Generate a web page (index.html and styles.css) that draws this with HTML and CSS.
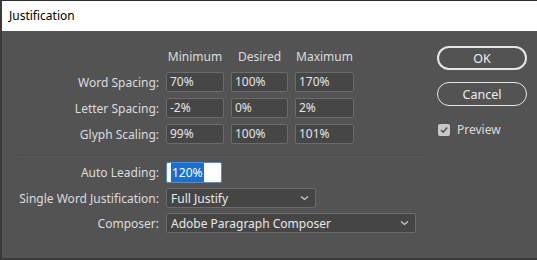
FILE: index.html
```html
<!DOCTYPE html>
<html lang="en">
<head>
    <meta charset="UTF-8">
    <title>Justification</title>
    <link rel="stylesheet" href="styles.css">
</head>
<body>
    <div class="window">
        <div class="titlebar">Justification</div>
        <div class="content">
            <div class="main">
                <div class="spacing">
                    <span></span>
                    <span class="head">Minimum</span>
                    <span class="head">Desired</span>
                    <span class="head">Maximum</span>

                    <label>Word Spacing:</label>
                    <div class="field">70%</div>
                    <div class="field">100%</div>
                    <div class="field">170%</div>

                    <label>Letter Spacing:</label>
                    <div class="field">-2%</div>
                    <div class="field">0%</div>
                    <div class="field">2%</div>

                    <label>Glyph Scaling:</label>
                    <div class="field">99%</div>
                    <div class="field">100%</div>
                    <div class="field">101%</div>
                </div>

                <hr class="sep">

                <div class="options">
                    <label>Auto Leading:</label>
                    <div class="field focus"><span class="sel">120%</span></div>

                    <label>Single Word Justification:</label>
                    <div class="select short">Full Justify
                        <svg width="9" height="6" viewBox="0 0 9 6"><path d="M1 1.5 L4.5 4.5 L8 1.5" fill="none" stroke="#cfcfcf" stroke-width="1.2"/></svg>
                    </div>

                    <label>Composer:</label>
                    <div class="select long">Adobe Paragraph Composer
                        <svg width="9" height="6" viewBox="0 0 9 6"><path d="M1 1.5 L4.5 4.5 L8 1.5" fill="none" stroke="#cfcfcf" stroke-width="1.2"/></svg>
                    </div>
                </div>
            </div>

            <div class="side">
                <button class="btn default">OK</button>
                <button class="btn">Cancel</button>
                <div class="check">
                    <span class="box">
                        <svg width="10" height="10" viewBox="0 0 10 10"><path d="M2 5 L4.2 7.2 L8.2 2.6" fill="none" stroke="#505050" stroke-width="1.6"/></svg>
                    </span>
                    Preview
                </div>
            </div>
        </div>
    </div>
</body>
</html>
```

FILE: styles.css
```css
body {
    margin: 0;
    background-color: #535353;
    font-family: "Noto Sans", "Open Sans", sans-serif;
    font-size: 12px;
}

.window {
    box-sizing: border-box;
    width: 537px;
    height: 260px;
    border-left: 2px solid #3a3a3a;
    border-top: 1px solid #2e2e2e;
    border-bottom: 2px solid #3a3a3a;
    background-color: #535353;
    color: #dcdcdc;
}

.titlebar {
    height: 30px;
    line-height: 30px;
    padding-left: 7px;
    background-color: #fff;
    color: #000;
    font-size: 12px;
}

.content {
    display: flex;
}

.main {
    width: 416px;
    padding: 18px 0 0 6px;
}

.spacing {
    display: grid;
    grid-template-columns: 151px 58px 57px 59px;
    column-gap: 7px;
    row-gap: 6px;
    align-items: center;
}

.head {
    text-align: center;
    line-height: 16px;
    margin-bottom: 1px;
}

label {
    text-align: right;
}

.field {
    height: 18px;
    line-height: 18px;
    padding: 0 3px;
    background-color: #464646;
    border: 1px solid #6b6b6b;
    border-radius: 2px;
    color: #e4e4e4;
}

.sep {
    margin: 11px 0 5px 10px;
    border: none;
    border-top: 1px solid #4a4a4a;
    border-bottom: 1px solid #595959;
    width: 406px;
}

.options {
    display: grid;
    grid-template-columns: 151px auto;
    column-gap: 7px;
    row-gap: 5px;
    align-items: center;
    justify-items: start;
}

.options label {
    justify-self: end;
}

.field.focus {
    width: 47px;
    height: 19px;
    line-height: 19px;
    padding-left: 4px;
    background-color: #fff;
    border-color: #4d8fdc;
    color: #fff;
}

.sel {
    background-color: #1a6fd1;
    padding: 1px 1px;
}

.select {
    display: flex;
    align-items: center;
    justify-content: space-between;
    height: 18px;
    padding: 0 6px 0 4px;
    background-color: #454545;
    border: 1px solid #6b6b6b;
    border-radius: 2px;
    color: #e8e8e8;
}

.select.short {
    width: 138px;
}

.select.long {
    width: 238px;
}

.side {
    padding: 15px 0 0 13px;
    display: flex;
    flex-direction: column;
}

.btn {
    width: 90px;
    height: 24px;
    border: 1px solid #e6e6e6;
    border-radius: 12px;
    background-color: transparent;
    color: #eee;
    font-family: inherit;
    font-size: 12.5px;
    margin-bottom: 12px;
}

.btn.default {
    border-width: 2px;
}

.check {
    display: flex;
    align-items: center;
    gap: 7px;
    padding-left: 1px;
    margin-top: 3px;
}

.box {
    width: 12px;
    height: 12px;
    border-radius: 2px;
    background-color: #c8c8c8;
    display: flex;
    align-items: center;
    justify-content: center;
}
```
